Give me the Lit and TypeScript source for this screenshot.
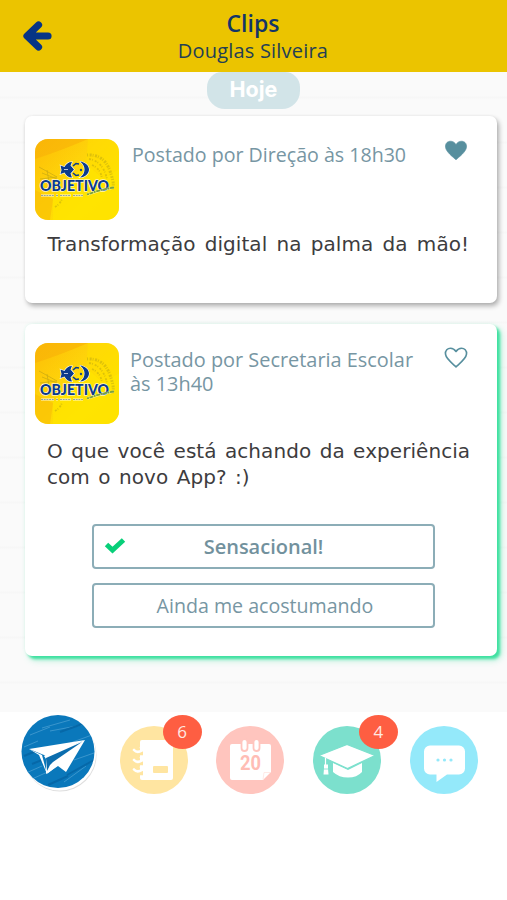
import { LitElement, html, css } from "lit";
import { customElement, property } from "lit/decorators.js";
import { classMap } from "lit/directives/class-map.js";

@customElement("school-logo")
class SchoolLogo extends LitElement {
  static styles = css`
    :host { display: block; width: 84px; height: 81px; border-radius: 13px; overflow: hidden; }
    svg { display: block; }
    .name { font: 900 15.5px "Lato", "Liberation Sans", sans-serif; }
  `;
  render() {
    return html`<svg width="84" height="81" viewBox="0 0 84 81">
      <defs>
        <linearGradient id="g" x1="0" y1="0" x2="1" y2="1">
          <stop offset="0" stop-color="#fdbc08" /><stop offset=".4" stop-color="#fed40a" />
          <stop offset=".7" stop-color="#ffe000" /><stop offset="1" stop-color="#ffda00" />
        </linearGradient>
      </defs>
      <rect width="84" height="81" fill="url(#g)" />
      <path d="M0 0H53Q25 12 0 20Z" fill="#f9b208" opacity=".65" />
      <path d="M0 51L18 60 15 81H0Z" fill="#f8bd06" opacity=".6" />
      <path d="M18 59L51 24 68 40 84 30V81H18Z" fill="#ffe500" opacity=".7" />
      <path d="M53 0H84V30L68 40 51 24Z" fill="#ffe000" opacity=".5" />
      <g fill="none" stroke="#a08d18" opacity=".5" stroke-width=".8">
        <path d="M4 28L22 38M7 34l15 6M5 40l17-2M12 31l2 12" />
        <path d="M52 16q17-1 23 16t1 18" stroke-width="3" stroke-dasharray="1 1.500 2 1" opacity=".7" />
        <path d="M54 20q14 2 18 20M57 26q9 4 10 14M20 68q5-3 7-8" stroke-width="1.800" stroke-dasharray="2 1 1 2" opacity=".7" />
      </g>
      <g stroke="#fff" stroke-width="1.200" paint-order="stroke" fill="#0b3b8c">
        <path d="M25.500 26.500l4 1.500c1.500-3 4-5 7.500-5l-1.500 3.500 3.500 4-3.500 4 1.500 4c-3.500 0-6-2-7.500-5l-4 1.500 1-4Z" />
        <path d="M45 22.500c5 .5 9 4 9 8s-4 8-9 8c3-2 4.500-5 4.500-8s-1.500-6-4.500-8Z" />
      </g>
      <g fill="none" stroke="#0b3b8c" stroke-width="1.600">
        <path d="M38 27l3-2.500 3 .5M38 34l3 2.500 3-.5" /><circle cx="46" cy="31" r=".4" />
      </g>
      <path d="M29 30.500h4" stroke="#fff" stroke-width=".7" />
      <text class="name" x="5" y="52" textLength="69" lengthAdjust="spacingAndGlyphs" fill="#0b3b8c"
        stroke="#fff" stroke-width="1.200" paint-order="stroke">OBJETIVO</text>
      <path d="M52 55.500q13-5 27-7" stroke="#fff" stroke-width="2.500" opacity=".5" fill="none" />
      <path d="M52 55.500q13-5 27-7" stroke="#7aa23c" stroke-width="1.800" stroke-dasharray="2 .6 4 .5" fill="none" />
      <path d="M6 56.500h13m2 0h2m2 0h11m2 0h10" stroke="#fff" stroke-width="2.200" opacity=".8" />
      <path d="M6 56.500h13m2 0h2m2 0h11m2 0h10" stroke="#8b9c94" stroke-width=".9" stroke-dasharray="2 .7" />
    </svg>`;
  }
}

@customElement("clip-card")
class ClipCard extends LitElement {
  @property({ attribute: false }) meta: string[] = [];
  @property({ attribute: false }) message: string[] = [];
  @property({ attribute: false }) options: string[] = [];
  @property({ type: Boolean }) liked = false;
  @property({ type: Boolean, reflect: true }) poll = false;

  static styles = css`
    :host {
      display: flex; flex-direction: column; box-sizing: border-box; height: 187px;
      border-radius: 7px; background: #fff; padding: 23px 28px 0 10px;
      box-shadow: 2px 3px 5px rgba(0, 0, 0, .3), 0 0 3px rgba(0, 0, 0, .06);
    }
    :host([poll]) {
      height: 332px; padding-top: 19px;
      box-shadow: 3px 3px 3px #3ee0a0, 4px 4px 7px rgba(62, 224, 160, .4), 0 0 3px rgba(62, 224, 160, .12);
    }
    .head { display: flex; height: 81px; }
    .meta {
      flex: 1; padding: 4px 0 0 13px; color: #7796a3; white-space: nowrap;
      font: 20px/24px "Open Sans", "Noto Sans", sans-serif;
    }
    :host([poll]) .meta { padding: 5px 0 0 11px; }
    .meta div, .message div { width: max-content; transform-origin: 0 50%; }
    .meta div { transform: scaleX(.98); }
    :host([poll]) .meta div { transform: scaleX(.995); }
    .heart { margin: 1px 1px 0 -1px; width: 24px; height: 22px; }
    :host([poll]) .heart { margin-top: 4px; }
    .message {
      padding: 11px 0 0 12.5px; color: #3d3c3e; white-space: nowrap; word-spacing: 2.8px; letter-spacing: .06px;
      font: 20px/26px "DejaVu Sans", sans-serif;
    }
    :host([poll]) .message { padding: 14px 0 0 12px; word-spacing: 2px; }
    .options { display: flex; flex-direction: column; gap: 14px; padding: 34px 34px 0 57px; }
    .option {
      box-sizing: border-box; height: 45px; border: 2px solid #8cadb7; border-radius: 4px;
      display: grid; grid-template-columns: 45px 1fr 45px; align-items: center; text-align: center;
      color: #7796a3; font: 20px/24px "Open Sans", "Noto Sans", sans-serif; white-space: nowrap;
    }
    .option.chosen { font-weight: 600; color: #72919d; }
    .option svg { display: block; margin: -3px 0 0 10px; }
    .label { grid-column: 2; margin-left: 3px; transform: scaleX(.98); }
    .chosen .label { margin-left: 0; transform: none; }
  `;

  render() {
    return html`
      <div class="head">
        <school-logo></school-logo>
        <div class="meta">${this.meta.map((l) => html`<div>${l}</div>`)}</div>
        <svg class="heart" viewBox="0 0 24 22">
          <path d="M12 19.800C9 17 2 12 1.500 7.200 1 3.300 3.700 1.200 6.500 1.200c2.700 0 4.200 1.300 5.500 3.300 1.300-2 2.800-3.300 5.500-3.300 2.800 0 5.500 2.100 5 6C22 12 15 17 12 19.800Z"
            fill=${this.liked ? "#578f9e" : "none"} stroke="#578f9e" stroke-width=${this.liked ? "0.6" : "1.6"} stroke-linejoin="round" />
        </svg>
      </div>
      <div class="message">${this.message.map((l) => html`<div>${l}</div>`)}</div>
      ${this.options.length ? html`<div class="options">
        ${this.options.map((o, i) => html`<div class=${classMap({ option: true, chosen: i === 0 })}>
          ${i === 0 ? html`<svg width="22" height="18" viewBox="0 0 22 18">
            <path d="M2.500 8.500l6 5.500L19.500 4" fill="none" stroke="#08cf79" stroke-width="5" /></svg>` : ""}
          <span class="label">${o}</span></div>`)}
      </div>` : ""}`;
  }
}

const icons = {
  clips: html`<svg width="78" height="82" viewBox="0 0 78 82">
    <defs><clipPath id="c"><circle cx="38" cy="38.500" r="36.500" /></clipPath></defs>
    <circle cx="40" cy="42" r="36.500" fill="#dedede" /><circle cx="39.500" cy="41" r="36.500" fill="#fff" />
    <circle cx="38" cy="38.500" r="36.500" fill="#0b78bb" />
    <g clip-path="url(#c)" fill="none" stroke="#5aa9d8" stroke-width="1" opacity=".6">
      <path d="M10 22L30 14M22 15L50 7M30 18L62 12M4 34l14-6M6 60l16-7M12 66l20-9M50 30l22-8M54 47l20-7M44 69l22-16" />
      <path d="M40 19l28-10M12 51l10-4M28 72l20-9M4 43l12-5M47 62l27-15" stroke="#045e9c" stroke-width="2" />
    </g>
    <path d="M9 36L65 27 27 44 24 42Z" fill="#fff" />
    <path d="M33 49L65 27 46 59 38 53 26 61 26 46 24 43 65 27Z" fill="#fff" />
    <path d="M26 45L62 29 33 49 30 52 27 58Z" fill="#0b6dae" />
    <path d="M9 36l13 6 5 19 4-9 4-1 2 2-10 8L19 42Z" fill="#fff" />
  </svg>`,
  notes: html`<svg width="68" height="68" viewBox="0 0 68 68">
    <circle cx="34" cy="34" r="34" fill="#ffe5a1" />
    <path d="M22 14h29a2 2 0 0 1 2 2v36a2 2 0 0 1-2 2H22a2 2 0 0 1-2-2V16a2 2 0 0 1 2-2Z" fill="#fff" />
    <rect x="33" y="40" width="15" height="7" rx="1" fill="#ffe5a1" />
    <g fill="none" stroke="#ffe5a1" stroke-width="4.500"><path d="M17 27h6M17 37h6M17 47h6" /></g>
    <g fill="none" stroke="#fff" stroke-width="2.600" stroke-linecap="round">
      <path d="M14 24q3 3.500 8 .5q1-2-1-3M14 34q3 3.500 8 .5q1-2-1-3M14 43.500q3 3.500 8 .5q1-2-1-3" /></g>
  </svg>`,
  agenda: html`<svg width="68" height="68" viewBox="0 0 68 68">
    <circle cx="34" cy="34" r="34" fill="#ffc5be" />
    <path d="M16 18h37a2 2 0 0 1 2 2v26l-8 8H16a2 2 0 0 1-2-2V20a2 2 0 0 1 2-2Z" fill="#fff" />
    <path d="M54 46.500h-6l-1 7" fill="none" stroke="#ffe4e0" stroke-width=".8" />
    <g fill="#fff" stroke="#ffc5be" stroke-width="1.800"><rect x="25.500" y="13" width="6" height="12" rx="3" /><rect x="37.500" y="13" width="6" height="12" rx="3" /></g>
    <text x="34.500" y="44" text-anchor="middle" textLength="21" lengthAdjust="spacingAndGlyphs" class="day">20</text>
  </svg>`,
  study: html`<svg width="68" height="68" viewBox="0 0 68 68">
    <circle cx="34" cy="34" r="34" fill="#7ce0cd" />
    <path d="M20 37l15 7 14-7v9q-5 5.500-14 5.500t-15-5.500Z" fill="#fff" />
    <path d="M6 29.500L34 18.500 62 29.500 34.500 42.500Z" fill="#fff" stroke="#7ce0cd" stroke-width="1.200" />
    <path d="M12.500 32v8" stroke="#fff" stroke-width="1.200" /><path d="M11 38.500h4v4l.5 6h-5l.5-6Z" fill="#fff" />
    <path d="M11 43h4" stroke="#7ce0cd" stroke-width=".8" />
  </svg>`,
  chat: html`<svg width="68" height="68" viewBox="0 0 68 68">
    <circle cx="34" cy="34" r="34" fill="#94e9fa" />
    <path d="M20 19.500h29a6 6 0 0 1 6 6v17a6 6 0 0 1-6 6H37L26.500 56V48.500H20a6 6 0 0 1-6-6v-17a6 6 0 0 1 6-6Z" fill="#fff" />
    <g fill="#94e9fa"><circle cx="28" cy="34" r="1.600" /><circle cx="34.500" cy="34" r="1.600" /><circle cx="41" cy="34" r="1.600" /></g>
  </svg>`,
};

@customElement("app-root")
class AppRoot extends LitElement {
  static styles = css`
    :host { display: flex; flex-direction: column; height: 900px; background: #fff; overflow: hidden; }
    header {
      box-sizing: border-box; height: 72px; flex: none; background: #ebc400;
      display: grid; grid-template-columns: 75px 1fr 76px; padding-top: 11px;
    }
    .back { margin: 9px 0 0 22px; }
    .titles { text-align: center; white-space: nowrap; font-family: "Open Sans", "Noto Sans", sans-serif; }
    .title { font-size: 23px; line-height: 25px; font-weight: 600; color: #133568; }
    .user { font-size: 20px; line-height: 29px; letter-spacing: .2px; color: #243f55; }
    main {
      height: 640px; flex: none; display: flex; flex-direction: column; align-items: stretch;
      background: repeating-linear-gradient(#fafafa 0 24px, #f7f7f7 25px 26px, #fafafa 27px 45px);
    }
    .day-pill {
      align-self: center; box-sizing: border-box; width: 93px; height: 37px; flex: none;
      border-radius: 15px 15px 18px 18px; background: #d2e4e8; color: #fff; text-align: center;
      font: 700 21.5px/35px "Inter", sans-serif;
    }
    .cards { display: flex; flex-direction: column; gap: 21px; padding: 7px 10px 0 25px; }
    nav { display: flex; height: 100px; padding: 0 30px 0 20px; }
    .item { position: relative; flex: none; width: 96.6px; }
    .item svg { display: block; margin: 14px 0 0 3.200px; }
    .item.active svg { margin: 1px 0 0 0; }
    .badge {
      position: absolute; left: 49px; top: 3px; width: 39px; height: 34px; border-radius: 50%;
      background: #fe5e42; color: #ffe9e2; text-align: center; font: 17px/34px "Open Sans", sans-serif;
    }
    .item:nth-child(2) .badge { left: 46px; }
    .day { font: 700 20px "Roboto", sans-serif; fill: #ffbdb5; }
  `;

  render() {
    const nav: [unknown, string][] = [
      [icons.clips, ""], [icons.notes, "6"], [icons.agenda, ""], [icons.study, "4"], [icons.chat, ""],
    ];
    return html`
      <header>
        <svg class="back" width="31" height="32" viewBox="0 0 31 32">
          <path d="M16.500 5L5 16l11.500 11M6 16h20" fill="none" stroke="#063485" stroke-width="7.200" stroke-linecap="round" stroke-linejoin="round" />
        </svg>
        <div class="titles"><div class="title">Clips</div><div class="user">Douglas Silveira</div></div>
      </header>
      <main>
        <div class="day-pill">Hoje</div>
        <div class="cards">
          <clip-card liked .meta=${["Postado por Direção às 18h30"]}
            .message=${["Transformação digital na palma da mão!"]}></clip-card>
          <clip-card poll .meta=${["Postado por Secretaria Escolar", "às 13h40"]}
            .message=${["O que você está achando da experiência", "com o novo App? :)"]}
            .options=${["Sensacional!", "Ainda me acostumando"]}></clip-card>
        </div>
      </main>
      <nav>${nav.map(([icon, count], i) => html`<div class=${classMap({ item: true, active: i === 0 })}>
        ${icon}${count ? html`<span class="badge">${count}</span>` : ""}</div>`)}</nav>`;
  }
}
